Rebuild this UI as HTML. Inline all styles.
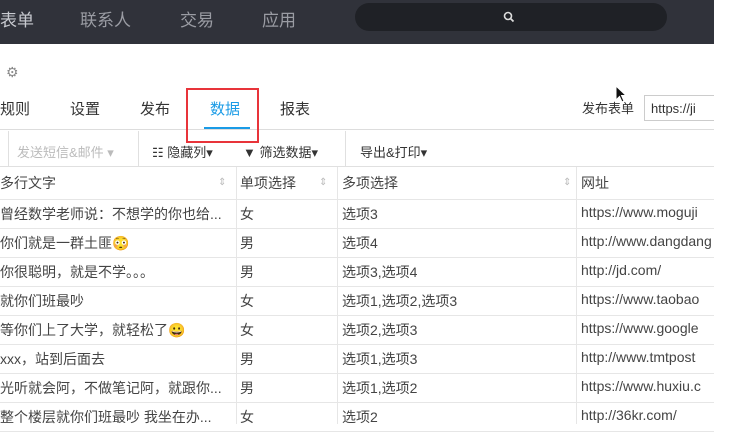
<!DOCTYPE html><html><head><meta charset="utf-8"><style>
*{margin:0;padding:0;box-sizing:border-box}
body{width:741px;height:424px;overflow:hidden;background:#fff;font-family:"Liberation Sans","Noto Sans CJK SC",sans-serif;position:relative;color:#333}
.a{position:absolute;white-space:nowrap}
.top{position:absolute;left:0;top:0;width:714px;height:44px;background:#30323a}
.nav{color:#9a9ca3;font-size:17px;top:6px}
.tab{font-size:15px;top:98px;color:#333}
.row{position:absolute;left:0;width:714px;border-bottom:1px solid #e6e6e6;font-size:14px;color:#444}
.row span{position:absolute;top:4px;white-space:nowrap;overflow:hidden}
.vl{position:absolute;top:167px;height:257px;width:1px;background:#e6e6e6}
.srt{color:#bbb;font-size:10px}
</style></head><body>
<div class="top"></div>
<div class="a nav" style="left:0;color:#c8cad0">表单</div>
<div class="a nav" style="left:80px">联系人</div>
<div class="a nav" style="left:180px">交易</div>
<div class="a nav" style="left:262px">应用</div>
<div class="a" style="left:355px;top:3px;width:312px;height:28px;border-radius:14px;background:#1f2126"></div>
<svg class="a" style="left:503px;top:11px" width="12" height="12"><circle cx="5" cy="5" r="3.5" stroke="#ddd" stroke-width="1.6" fill="none"/><line x1="7.5" y1="7.5" x2="10.5" y2="10.5" stroke="#ddd" stroke-width="1.8"/></svg>
<div class="a" style="left:6px;top:64px;color:#888;font-size:14px">⚙</div>
<div class="a tab" style="left:0">规则</div>
<div class="a tab" style="left:70px">设置</div>
<div class="a tab" style="left:140px">发布</div>
<div class="a tab" style="left:210px;color:#1a9be6">数据</div>
<div class="a tab" style="left:280px">报表</div>
<div class="a" style="left:0;top:129px;width:714px;height:1px;background:#ddd"></div>
<div class="a" style="left:204px;top:127px;width:46px;height:2px;background:#1a9be6"></div>
<div class="a" style="left:186px;top:88px;width:73px;height:55px;border:2px solid #e8343a"></div>
<div class="a" style="left:582px;top:98px;font-size:13px">发布表单</div>
<div class="a" style="left:644px;top:95px;width:75px;height:26px;border:1px solid #ccc;font-size:13px;padding:5px 6px">https://ji</div>
<div class="a" style="left:714px;top:44px;width:27px;height:380px;background:#fff"></div>
<div class="a" style="left:8px;top:131px;width:1px;height:35px;background:#e0e0e0"></div>
<div class="a" style="left:17px;top:142px;font-size:13px;color:#bbb">发送短信&amp;邮件 ▾</div>
<div class="a" style="left:138px;top:131px;width:1px;height:35px;background:#e0e0e0"></div>
<div class="a" style="left:152px;top:142px;font-size:13px">☷ 隐藏列▾</div>
<div class="a" style="left:243px;top:142px;font-size:13px">▼ 筛选数据▾</div>
<div class="a" style="left:345px;top:131px;width:1px;height:35px;background:#e0e0e0"></div>
<div class="a" style="left:360px;top:142px;font-size:13px">导出&amp;打印▾</div>
<div class="a" style="left:0;top:166px;width:714px;height:1px;background:#e0e0e0"></div>
<div class="row" style="top:167px;height:33px"><span style="left:0;top:6px">多行文字</span><span class="srt" style="left:218px;top:10px">⇕</span><span style="left:240px;top:6px">单项选择</span><span class="srt" style="left:319px;top:10px">⇕</span><span style="left:342px;top:6px">多项选择</span><span class="srt" style="left:563px;top:10px">⇕</span><span style="left:581px;top:6px">网址</span></div>
<div class="row" style="top:200px;height:29px"><span style="left:0">曾经数学老师说：不想学的你也给...</span><span style="left:240px">女</span><span style="left:342px">选项3</span><span style="left:581px;width:133px">https://www.moguji</span></div>
<div class="row" style="top:229px;height:29px"><span style="left:0">你们就是一群土匪😳</span><span style="left:240px">男</span><span style="left:342px">选项4</span><span style="left:581px;width:133px">http://www.dangdang</span></div>
<div class="row" style="top:258px;height:29px"><span style="left:0">你很聪明，就是不学。。。</span><span style="left:240px">男</span><span style="left:342px">选项3,选项4</span><span style="left:581px">http://jd.com/</span></div>
<div class="row" style="top:287px;height:29px"><span style="left:0">就你们班最吵</span><span style="left:240px">女</span><span style="left:342px">选项1,选项2,选项3</span><span style="left:581px;width:133px">https://www.taobao</span></div>
<div class="row" style="top:316px;height:29px"><span style="left:0">等你们上了大学，就轻松了😀</span><span style="left:240px">女</span><span style="left:342px">选项2,选项3</span><span style="left:581px;width:133px">https://www.google</span></div>
<div class="row" style="top:345px;height:29px"><span style="left:0">xxx，站到后面去</span><span style="left:240px">男</span><span style="left:342px">选项1,选项3</span><span style="left:581px;width:133px">http://www.tmtpost</span></div>
<div class="row" style="top:374px;height:29px"><span style="left:0">光听就会阿，不做笔记阿，就跟你...</span><span style="left:240px">男</span><span style="left:342px">选项1,选项2</span><span style="left:581px;width:133px">https://www.huxiu.c</span></div>
<div class="row" style="top:403px;height:29px"><span style="left:0">整个楼层就你们班最吵 我坐在办...</span><span style="left:240px">女</span><span style="left:342px">选项2</span><span style="left:581px">http://36kr.com/</span></div>
<div class="vl" style="left:236px"></div><div class="vl" style="left:337px"></div><div class="vl" style="left:576px"></div>
<svg class="a" style="left:615px;top:85px" width="14" height="20"><path d="M1 1 L1 15 L4.5 11.5 L7 17 L9 16 L6.5 10.5 L11 10.5 Z" fill="#111" stroke="#fff" stroke-width="1"/></svg>
</body></html>
